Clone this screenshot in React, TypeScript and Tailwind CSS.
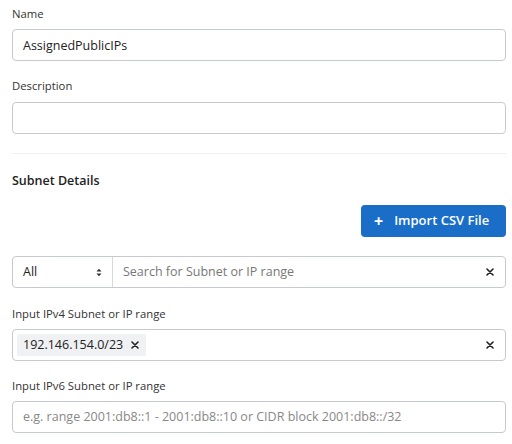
import React from "react";

const font = { fontFamily: "'Open Sans', Lato, sans-serif" };

function Label({ children }: { children: React.ReactNode }) {
  return <div className="text-[11.3px] leading-[14px] text-[#333]">{children}</div>;
}

function Clear() {
  return (
    <svg width="8" height="8" viewBox="0 0 8 8" className="text-[#222]">
      <path d="M1 1L7 7M7 1L1 7" stroke="currentColor" strokeWidth="1.6" strokeLinecap="round" />
    </svg>
  );
}

export default function App() {
  return (
    <div className="w-[512px] h-[444px] bg-white pl-3 pr-[6px] pt-[7px]" style={font}>
      <Label>Name</Label>
      <input
        className="mt-2 block w-full h-[32px] rounded-[4px] border border-[#c6cad0] px-[10px] text-[12.5px] text-[#222] outline-none"
        defaultValue="AssignedPublicIPs"
      />

      <div className="mt-[18px]">
        <Label>Description</Label>
      </div>
      <input className="mt-[9px] block w-full h-[32px] rounded-[4px] border border-[#c6cad0] px-[10px] text-[12.5px] outline-none" />

      <div className="mt-[19px] h-px bg-[#eef0f2]" />

      <div className="mt-[19px] text-[12.5px] leading-[15px] font-semibold text-[#222]">Subnet Details</div>

      <div className="mt-[17px] flex justify-end">
        <button className="h-[32px] w-[145px] rounded-[4px] bg-[#1b6ec8] text-white text-[13px] font-semibold flex items-center pl-[13px] gap-[11px]">
          <span className="text-[16px] leading-none font-bold">+</span>
          <span>Import CSV File</span>
        </button>
      </div>

      <div className="mt-[19px] flex h-[32px] rounded-[4px] border border-[#c6cad0]">
        <div className="w-[100px] flex items-center justify-between pl-[10px] pr-[10px] border-r border-[#d5d8dc] text-[12.5px] text-[#222]">
          <span>All</span>
          <svg width="6" height="9" viewBox="0 0 6 9">
            <path d="M0.5 3.5L3 0.8L5.5 3.5Z M0.5 5.5L3 8.2L5.5 5.5Z" fill="#333" />
          </svg>
        </div>
        <div className="flex-1 flex items-center pl-[10px] pr-[11px] text-[12.5px]">
          <span className="flex-1 text-[#777]">Search for Subnet or IP range</span>
          <Clear />
        </div>
      </div>

      <div className="mt-[19px]">
        <Label>Input IPv4 Subnet or IP range</Label>
      </div>
      <div className="mt-2 flex items-center h-[32px] rounded-[4px] border border-[#c6cad0] pl-[4px] pr-[11px]">
        <div className="h-[22px] flex items-center gap-[8px] rounded-[2px] bg-[#f0f1f2] pl-[6px] pr-[7px] text-[12.5px] text-[#222]">
          <span>192.146.154.0/23</span>
          <Clear />
        </div>
        <div className="flex-1" />
        <Clear />
      </div>

      <div className="mt-[18px]">
        <Label>Input IPv6 Subnet or IP range</Label>
      </div>
      <div className="mt-2 flex items-center h-[32px] rounded-[4px] border border-[#c6cad0] px-[10px] text-[12.5px] text-[#888]">
        e.g. range 2001:db8::1 - 2001:db8::10 or CIDR block 2001:db8::/32
      </div>
    </div>
  );
}
